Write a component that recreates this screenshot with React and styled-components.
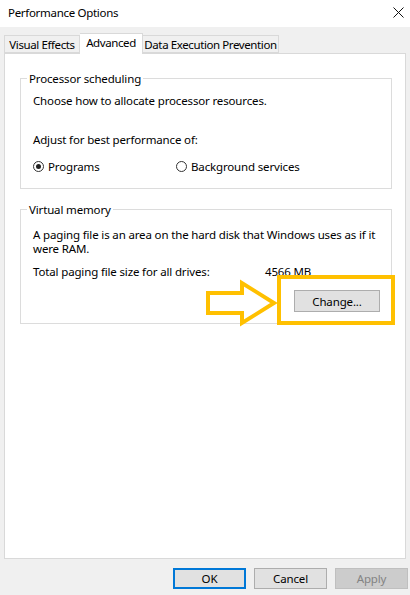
import React from "react";
import styled, { createGlobalStyle } from "styled-components";

const GlobalStyle = createGlobalStyle`
  html, body {
    margin: 0;
    padding: 0;
    background: #f0f0f0;
  }
  body {
    font-family: "Noto Sans", "Liberation Sans", sans-serif;
    font-size: 11.5px;
    letter-spacing: -0.15px;
    color: #000;
  }
`;

const Window = styled.div`
  width: 410px;
  height: 595px;
  display: flex;
  flex-direction: column;
  background: #f0f0f0;
  overflow: hidden;
`;

const TitleBar = styled.div`
  height: 27px;
  background: #fff;
  display: flex;
  align-items: center;
  justify-content: space-between;
  padding: 0 6px 3px 8px;
  box-sizing: border-box;
  letter-spacing: -0.3px;
`;

const Body = styled.div`
  flex: 1;
  display: flex;
  flex-direction: column;
  padding: 7px 4px 0 4px;
`;

const TabStrip = styled.div`
  display: flex;
  align-items: flex-end;
  height: 20px;
  position: relative;
  z-index: 1;
  margin-bottom: -1px;
`;

const Tab = styled.div`
  box-sizing: border-box;
  width: ${(p) => p.w}px;
  height: ${(p) => (p.active ? "21px" : "18px")};
  padding-bottom: ${(p) => (p.active ? "3px" : "0")};
  margin-bottom: ${(p) => (p.active ? "0" : "1px")};
  border: 1px solid #d9d9d9;
  border-bottom: ${(p) => (p.active ? "none" : "1px solid #d9d9d9")};
  border-left: ${(p) => (p.noLeft ? "none" : "1px solid #d9d9d9")};
  background: ${(p) => (p.active ? "#fff" : "#f0f0f0")};
  display: flex;
  align-items: center;
  justify-content: center;
  white-space: nowrap;
  letter-spacing: -0.4px;
`;

const Panel = styled.div`
  height: 506px;
  box-sizing: border-box;
  background: #fff;
  border: 1px solid #d9d9d9;
  padding: 17px 13px 0 15px;
  display: flex;
  flex-direction: column;
  gap: 13px;
`;

const Group = styled.fieldset`
  margin: 0;
  height: ${(p) => p.h}px;
  box-sizing: border-box;
  border: 1px solid #dcdcdc;
  padding: 0 11px 0 12px;
  display: flex;
  flex-direction: column;
`;

const Legend = styled.legend`
  padding: 0 2px;
  margin-left: -6px;
  line-height: 15px;
`;

const Line = styled.div`
  line-height: 14px;
  margin-top: ${(p) => p.mt || 0}px;
`;

const RadioRow = styled.div`
  display: flex;
  margin-top: ${(p) => p.mt || 0}px;
`;

const RadioItem = styled.label`
  display: flex;
  align-items: center;
  gap: 4px;
  width: ${(p) => p.w}px;
`;

const RadioDot = styled.span`
  width: 11px;
  height: 11px;
  box-sizing: border-box;
  border: 1px solid #333;
  border-radius: 50%;
  display: flex;
  align-items: center;
  justify-content: center;
  &::after {
    content: "";
    display: ${(p) => (p.checked ? "block" : "none")};
    width: 5px;
    height: 5px;
    border-radius: 50%;
    background: #222;
  }
`;

const SizeRow = styled.div`
  display: flex;
  margin-top: 9px;
  line-height: 14px;
`;

const SizeLabel = styled.span`
  width: 232px;
`;

const ButtonRow = styled.div`
  position: relative;
  display: flex;
  justify-content: flex-end;
  margin-top: ${(p) => p.mt || 0}px;
`;

const Button = styled.button`
  font-family: inherit;
  font-size: 11.5px;
  letter-spacing: inherit;
  width: ${(p) => p.w || 73}px;
  height: ${(p) => p.h || 21}px;
  box-sizing: border-box;
  padding: 0;
  background: ${(p) => (p.disabled ? "#cccccc" : "#e1e1e1")};
  color: ${(p) => (p.disabled ? "#838383" : "#000")};
  border: ${(p) =>
    p.primary ? "2px solid #0078d7" : p.disabled ? "1px solid #bfbfbf" : "1px solid #adadad"};
  position: relative;
  z-index: 1;
`;

const Footer = styled.div`
  display: flex;
  justify-content: flex-end;
  gap: 8px;
  padding: 9px 0 0 0;
  margin-right: -2px;
`;

const Callout = styled.svg`
  position: absolute;
  left: 0;
  top: 0;
  overflow: visible;
  pointer-events: none;
`;

const CloseIcon = () => (
  <svg width="11" height="11" viewBox="0 0 11 11">
    <path d="M0.5 0.5 L10.5 10.5 M10.5 0.5 L0.5 10.5" stroke="#111" strokeWidth="1" />
  </svg>
);

export default function App() {
  return (
    <>
      <GlobalStyle />
      <Window>
        <TitleBar>
          <span>Performance Options</span>
          <CloseIcon />
        </TitleBar>
        <Body>
          <TabStrip>
            <Tab w={76}>Visual Effects</Tab>
            <Tab w={63} active noLeft>Advanced</Tab>
            <Tab w={136} noLeft>Data Execution Prevention</Tab>
          </TabStrip>
          <Panel>
            <Group h={118}>
              <Legend>Processor scheduling</Legend>
              <Line mt={8}>Choose how to allocate processor resources.</Line>
              <Line mt={25}>Adjust for best performance of:</Line>
              <RadioRow mt={12}>
                <RadioItem w={143}>
                  <RadioDot checked />
                  Programs
                </RadioItem>
                <RadioItem>
                  <RadioDot />
                  Background services
                </RadioItem>
              </RadioRow>
            </Group>
            <Group h={122}>
              <Legend>Virtual memory</Legend>
              <Line mt={11}>A paging file is an area on the hard disk that Windows uses as if it</Line>
              <Line>were RAM.</Line>
              <SizeRow>
                <SizeLabel>Total paging file size for all drives:</SizeLabel>
                <span>4566 MB</span>
              </SizeRow>
              <ButtonRow mt={11}>
                <Callout width="1" height="1">
                  <g fill="none" stroke="#ffc000" strokeWidth="4" strokeLinejoin="miter">
                    <polygon points="175,3 209,3 209,-7 241,13 209,33 209,23 175,23" fill="#fff" />
                    <rect x="246" y="-13" width="114" height="46" />
                  </g>
                </Callout>
                <Button w={86} h={22}>Change...</Button>
              </ButtonRow>
            </Group>
          </Panel>
          <Footer>
            <Button primary>OK</Button>
            <Button>Cancel</Button>
            <Button disabled>Apply</Button>
          </Footer>
        </Body>
      </Window>
    </>
  );
}
